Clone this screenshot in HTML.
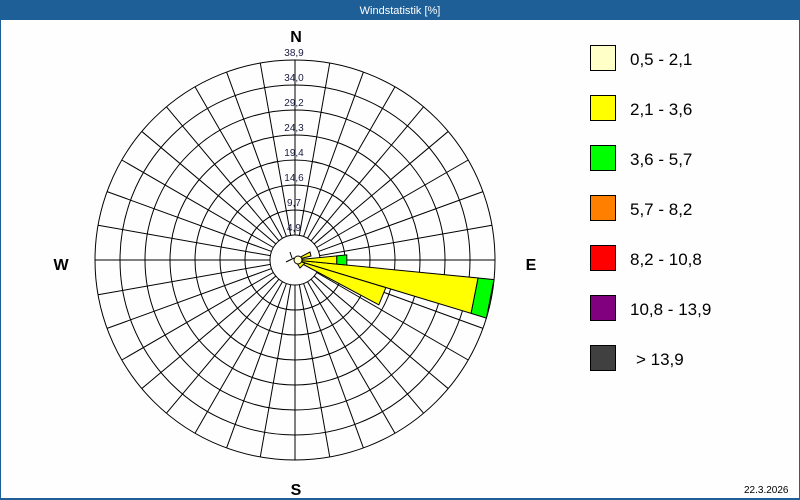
<!DOCTYPE html>
<html><head><meta charset="utf-8"><style>
html,body{margin:0;padding:0;background:#fdfefd;}
body{width:800px;height:500px;overflow:hidden;position:relative;font-family:"Liberation Sans",sans-serif;}
</style></head><body>
<svg width="800" height="500" xmlns="http://www.w3.org/2000/svg" style="position:absolute;left:0;top:0">
<rect x="0" y="0" width="800" height="500" fill="#fdfefd"/>
<rect x="0" y="0" width="800" height="20" fill="#1f5f97"/>
<rect x="0" y="0" width="1" height="500" fill="#1f5f97"/>
<rect x="799" y="0" width="1" height="500" fill="#1f5f97"/>
<rect x="0" y="498" width="800" height="2" fill="#1f5f97"/>
<text x="400" y="14" font-size="11" fill="#fff" text-anchor="middle" font-family="Liberation Sans, sans-serif">Windstatistik [%]</text>
<g fill="none" stroke="#000" stroke-width="1">
<circle cx="295" cy="260" r="200"/><circle cx="295" cy="260" r="175"/><circle cx="295" cy="260" r="150"/>
<circle cx="295" cy="260" r="125"/><circle cx="295" cy="260" r="100"/><circle cx="295" cy="260" r="75"/>
<circle cx="295" cy="260" r="50"/>
<g id="sp" transform="translate(295,260)">
<line x1="0" y1="-25" x2="0" y2="-200" transform="rotate(0)"/><line x1="0" y1="-25" x2="0" y2="-200" transform="rotate(10)"/><line x1="0" y1="-25" x2="0" y2="-200" transform="rotate(20)"/><line x1="0" y1="-25" x2="0" y2="-200" transform="rotate(30)"/><line x1="0" y1="-25" x2="0" y2="-200" transform="rotate(40)"/><line x1="0" y1="-25" x2="0" y2="-200" transform="rotate(50)"/><line x1="0" y1="-25" x2="0" y2="-200" transform="rotate(60)"/><line x1="0" y1="-25" x2="0" y2="-200" transform="rotate(70)"/><line x1="0" y1="-25" x2="0" y2="-200" transform="rotate(80)"/><line x1="0" y1="-25" x2="0" y2="-200" transform="rotate(90)"/><line x1="0" y1="-25" x2="0" y2="-200" transform="rotate(100)"/><line x1="0" y1="-25" x2="0" y2="-200" transform="rotate(110)"/><line x1="0" y1="-25" x2="0" y2="-200" transform="rotate(120)"/><line x1="0" y1="-25" x2="0" y2="-200" transform="rotate(130)"/><line x1="0" y1="-25" x2="0" y2="-200" transform="rotate(140)"/><line x1="0" y1="-25" x2="0" y2="-200" transform="rotate(150)"/><line x1="0" y1="-25" x2="0" y2="-200" transform="rotate(160)"/><line x1="0" y1="-25" x2="0" y2="-200" transform="rotate(170)"/><line x1="0" y1="-25" x2="0" y2="-200" transform="rotate(180)"/><line x1="0" y1="-25" x2="0" y2="-200" transform="rotate(190)"/><line x1="0" y1="-25" x2="0" y2="-200" transform="rotate(200)"/><line x1="0" y1="-25" x2="0" y2="-200" transform="rotate(210)"/><line x1="0" y1="-25" x2="0" y2="-200" transform="rotate(220)"/><line x1="0" y1="-25" x2="0" y2="-200" transform="rotate(230)"/><line x1="0" y1="-25" x2="0" y2="-200" transform="rotate(240)"/><line x1="0" y1="-25" x2="0" y2="-200" transform="rotate(250)"/><line x1="0" y1="-25" x2="0" y2="-200" transform="rotate(260)"/><line x1="0" y1="-25" x2="0" y2="-200" transform="rotate(270)"/><line x1="0" y1="-25" x2="0" y2="-200" transform="rotate(280)"/><line x1="0" y1="-25" x2="0" y2="-200" transform="rotate(290)"/><line x1="0" y1="-25" x2="0" y2="-200" transform="rotate(300)"/><line x1="0" y1="-25" x2="0" y2="-200" transform="rotate(310)"/><line x1="0" y1="-25" x2="0" y2="-200" transform="rotate(320)"/><line x1="0" y1="-25" x2="0" y2="-200" transform="rotate(330)"/><line x1="0" y1="-25" x2="0" y2="-200" transform="rotate(340)"/><line x1="0" y1="-25" x2="0" y2="-200" transform="rotate(350)"/>
</g>
<circle cx="295" cy="260" r="25" fill="#fdfefd"/>
</g>
<g stroke="#000" stroke-width="1">
<polygon points="295,260 478.1,278 471.1,313.4" fill="#ffff00"/>
<polygon points="478.1,278 494,279.6 486.4,318.1 471.1,313.4" fill="#00ff00"/>
<polygon points="295,260 385.9,287.6 378.8,304.8" fill="#ffff00"/>
<polygon points="295,260 336.8,255.9 336.8,264.1" fill="#ffff00"/>
<polygon points="336.8,255.9 346.8,254.9 346.8,265.1 336.8,264.1" fill="#00ff00"/>
<polygon points="295,260 310,252 311,256" fill="#ffff00"/>
<polygon points="295,260 305,263 300,268" fill="#ffff00"/>
</g>
<circle cx="298" cy="260" r="4" fill="#ffffc8" stroke="#000" stroke-width="1"/>
<line x1="286" y1="262" x2="294" y2="258" stroke="#000"/>
<line x1="290" y1="252" x2="292" y2="258" stroke="#000"/>
<g font-size="10" fill="#1a1a40" text-anchor="middle" font-family="Liberation Sans, sans-serif">
<text x="294" y="56">38,9</text><text x="294" y="81">34,0</text><text x="294" y="106">29,2</text><text x="294" y="131">24,3</text>
<text x="294" y="156">19,4</text><text x="294" y="181">14,6</text><text x="294" y="206">9,7</text><text x="294" y="231">4,9</text>
</g>
<g font-size="16" font-weight="bold" fill="#000" text-anchor="middle" font-family="Liberation Sans, sans-serif">
<text x="296" y="42">N</text><text x="296" y="495">S</text><text x="61" y="270">W</text><text x="531" y="270">E</text>
</g>
<g stroke="#000" stroke-width="1">
<rect x="590.5" y="45.5" width="25" height="25" fill="#ffffc8"/>
<rect x="590.5" y="95.5" width="25" height="25" fill="#ffff00"/>
<rect x="590.5" y="145.5" width="25" height="25" fill="#00ff00"/>
<rect x="590.5" y="195.5" width="25" height="25" fill="#ff8000"/>
<rect x="590.5" y="245.5" width="25" height="25" fill="#ff0000"/>
<rect x="590.5" y="295.5" width="25" height="25" fill="#800080"/>
<rect x="590.5" y="345.5" width="25" height="25" fill="#404040"/>
</g>
<g font-size="17" fill="#000" font-family="Liberation Sans, sans-serif">
<text x="630" y="65">0,5 - 2,1</text><text x="630" y="115">2,1 - 3,6</text><text x="630" y="165">3,6 - 5,7</text>
<text x="630" y="215">5,7 - 8,2</text><text x="630" y="265">8,2 - 10,8</text><text x="630" y="315">10,8 - 13,9</text>
<text x="636" y="365">&gt; 13,9</text>
</g>
<text x="744" y="493" font-size="10" fill="#000" font-family="Liberation Sans, sans-serif">22.3.2026</text>
</svg>
</body></html>
